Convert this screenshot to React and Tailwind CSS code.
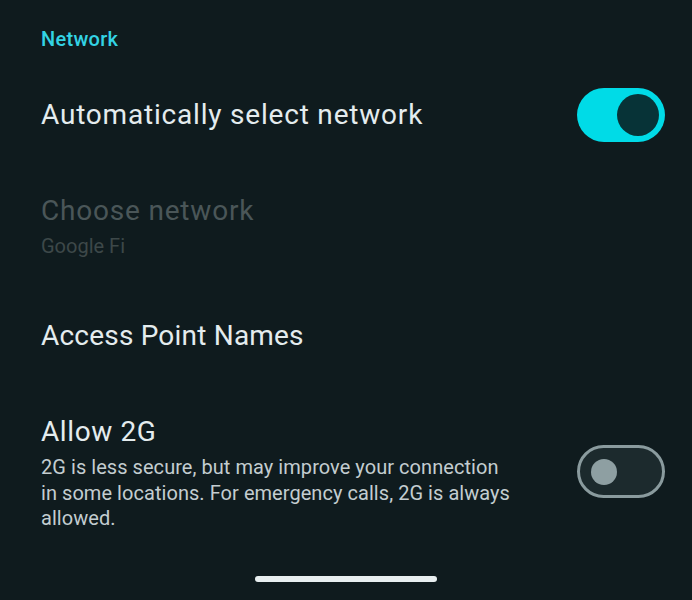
import React from 'react';

const font = { fontFamily: 'Roboto, "Noto Sans", sans-serif' };

const SwitchOn = () => (
  <div className="w-[88px] h-[54px] rounded-full bg-[#00dbe7] flex items-center justify-end pr-[6px] shrink-0">
    <div className="w-[42px] h-[42px] rounded-full bg-[#073337]" />
  </div>
);

const SwitchOff = ({ className = '' }) => (
  <div className={`w-[88px] h-[53px] rounded-full border-[3px] border-[#8a9b9e] bg-[#1c2a2d] flex items-center pl-[11px] shrink-0 ${className}`}>
    <div className="w-[26px] h-[26px] rounded-full bg-[#8e9fa2]" />
  </div>
);

export default function App() {
  return (
    <div className="w-[692px] h-[600px] bg-[#0f1b1e] flex flex-col overflow-hidden" style={font}>
      <div className="pl-[41px] pr-[27px] flex flex-col">
        <div className="h-[78px] flex items-center">
          <span className="text-[20px] font-medium leading-none tracking-[0.3px] text-[#33d3e4]">Network</span>
        </div>

        <div className="h-[74px] flex items-center justify-between">
          <span className="text-[28px] leading-[34px] tracking-[0.8px] text-[#e4ecee]">Automatically select network</span>
          <SwitchOn />
        </div>

        <div className="mt-[42px] flex flex-col">
          <span className="text-[28px] leading-[34px] tracking-[0.8px] text-[#4a5658]">Choose network</span>
          <span className="mt-[4px] text-[20px] leading-[28px] text-[#3d4849]">Google Fi</span>
        </div>

        <div className="mt-[59px]">
          <span className="text-[28px] leading-[34px] tracking-[0.2px] text-[#e4ecee]">Access Point Names</span>
        </div>

        <div className="mt-[62px] flex justify-between items-start">
          <div className="flex flex-col w-[476px]">
            <span className="text-[28px] leading-[34px] tracking-[0.6px] text-[#e4ecee]">Allow 2G</span>
            <p className="mt-[6px] text-[20px] leading-[25.5px] tracking-[0.05px] text-[#c3cdd0]">
              2G is less secure, but may improve your connection in some locations. For emergency calls, 2G is always allowed.
            </p>
          </div>
          <SwitchOff className="mt-[30px]" />
        </div>
      </div>

      <div className="mt-auto mb-[18px] flex justify-center">
        <div className="w-[182px] h-[6px] rounded-full bg-[#e8eff0]" />
      </div>
    </div>
  );
}
